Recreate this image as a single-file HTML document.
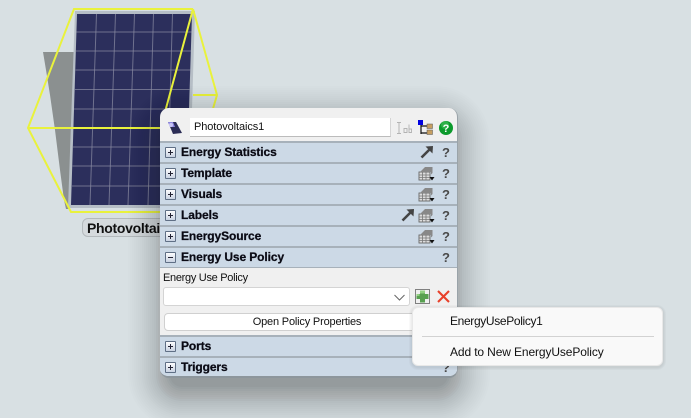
<!DOCTYPE html>
<html><head><meta charset="utf-8"><style>
*{box-sizing:border-box}
html,body{margin:0;padding:0}
body{width:691px;height:418px;overflow:hidden;background:#d8e0e3;position:relative;font-family:"Liberation Sans",sans-serif;color:#111}
.a{position:absolute}
#panel{left:160px;top:108px;width:298px;height:270px;background:#f0f0f0;border-radius:9px;border-right:1px solid #9aa3a9;border-bottom:2px solid #8d969c;overflow:hidden}
.row{position:absolute;left:0;width:297px;height:19px;background:#ccd9e6}
.sep{position:absolute;left:0;width:297px;height:2px;background:#a7b1ba}
.t{position:absolute;left:21px;top:.5px;font-weight:bold;font-size:12px;line-height:16px;color:#0a0a14;letter-spacing:-.1px;-webkit-text-stroke:.25px #0a0a14;white-space:nowrap}
.box{position:absolute;left:5px;top:4px;width:11px;height:11px;border:1px solid #5f6f85;border-radius:1px;background:linear-gradient(#fdfdfe,#c9d3e2)}
.box:before{content:"";position:absolute;left:2px;top:4px;width:5px;height:1px;background:#223}
.box.p:after{content:"";position:absolute;left:4px;top:2px;width:1px;height:5px;background:#223}
.q{position:absolute;left:282px;top:1px;font-weight:bold;font-size:13px;line-height:17px;color:#4a4a4a}
svg.i{position:absolute;overflow:visible}
</style></head><body>

<svg class="a" style="left:0;top:0" width="691" height="418">
<polygon points="43,52 74,52 69,209 66,209 64,200 60,170 55,130 50,95 46,70" fill="#8b9090"/>
<polygon points="75,11 195,11 189,208 68,208" fill="#b6bec6"/>
<polygon points="77,14 192,14 186,205 71,205" fill="#2c2f5c"/>
<g stroke="#8b8da4" stroke-width="1" stroke-opacity=".7" fill="none">
<line x1="96.500" y1="14" x2="90" y2="205"/><line x1="115.500" y1="14" x2="109" y2="205"/><line x1="134.500" y1="14" x2="128" y2="205"/><line x1="153.500" y1="14" x2="148" y2="205"/><line x1="172.500" y1="14" x2="167" y2="205"/>
<line x1="76.500" y1="32" x2="191.500" y2="32"/><line x1="76" y1="51" x2="191" y2="51"/><line x1="75.500" y1="70" x2="190.500" y2="70"/><line x1="75" y1="89.500" x2="190" y2="89.500"/><line x1="74" y1="109" x2="189" y2="109"/><line x1="73.500" y1="128" x2="188.500" y2="128"/><line x1="73" y1="147" x2="188" y2="147"/><line x1="72.500" y1="166" x2="187.500" y2="166"/><line x1="72" y1="186" x2="187" y2="186"/>
</g>
<g stroke="#e9f23c" stroke-width="2" fill="none">
<polyline points="193,9 74,9 28,128 71,212 165,212"/>
<polyline points="28,128 165,128"/>
<polyline points="193,9 217,95 212,112"/>
<line x1="193" y1="9" x2="165" y2="112"/>
<line x1="193" y1="95" x2="217" y2="95"/>
</g>
</svg>

<div class="a" style="left:82px;top:218px;width:90px;height:19px;background:#d5dadd;border:1px solid #b4babd;border-radius:6px;font-weight:bold;font-size:14px;line-height:18px;padding-left:4px;white-space:nowrap;overflow:hidden;letter-spacing:-.3px;color:#111">Photovoltaics1</div>

<svg class="a" style="left:0;top:0" width="691" height="418">
<g fill="#2c3232" fill-opacity=".026">
<rect x="170" y="128" width="278" height="259" rx="12"/><rect x="168" y="126" width="282" height="263" rx="14"/><rect x="166" y="124" width="286" height="267" rx="16"/><rect x="164" y="122" width="290" height="271" rx="18"/><rect x="162" y="120" width="294" height="275" rx="20"/><rect x="160" y="118" width="298" height="279" rx="22"/><rect x="158" y="116" width="302" height="283" rx="24"/><rect x="156" y="114" width="306" height="287" rx="26"/>
</g>
<g fill="#2c3232" fill-opacity=".016">
<rect x="154" y="112" width="310" height="291" rx="28"/><rect x="152" y="110" width="314" height="295" rx="30"/><rect x="150" y="108" width="318" height="299" rx="32"/><rect x="148" y="106" width="322" height="303" rx="34"/><rect x="146" y="104" width="326" height="307" rx="36"/><rect x="144" y="102" width="330" height="311" rx="38"/><rect x="142" y="100" width="334" height="315" rx="40"/>
</g>
<g fill="#2c3232" fill-opacity=".007">
<rect x="140" y="98" width="338" height="319" rx="42"/><rect x="138" y="96" width="342" height="323" rx="44"/><rect x="136" y="94" width="346" height="327" rx="46"/><rect x="134" y="92" width="350" height="331" rx="48"/><rect x="132" y="90" width="354" height="335" rx="50"/><rect x="130" y="88" width="358" height="339" rx="52"/><rect x="128" y="86" width="362" height="343" rx="54"/>
</g>
</svg>

<div class="a" id="panel">
  <svg class="i" style="left:7px;top:13px" width="16" height="14" viewBox="0 0 16 14"><polygon points="1,1 9,1 15,12 6,13" fill="#2b2c55"/><polygon points="1,1 6,1 8,6 3,6" fill="#8e86e0"/><circle cx="4" cy="4" r="2" fill="#c9c6f5"/></svg>
  <div class="a" style="left:30px;top:10px;width:201px;height:19px;background:#fff;border-bottom:1px solid #bcbcbc;border-right:1px solid #d5d5d5;font-size:11px;line-height:18px;padding-left:4px;color:#111;letter-spacing:-.1px">Photovoltaics1</div>
  <svg class="i" style="left:236px;top:13px" width="16" height="14" viewBox="0 0 16 14" fill="none" stroke="#b3b3b3"><path d="M1 1.500h4M1 12.500h4M3 1.500v11"/><path d="M8 7.500h3v4h-3zM13 3.500v8h2.500v-3.500H13" stroke-width=".9"/></svg>
  <svg class="i" style="left:258px;top:12px" width="15" height="16" viewBox="0 0 15 16"><path d="M3 3v11M3 6h6M3 13h6" stroke="#111" stroke-width="1.2" fill="none"/><rect x="0" y="0" width="5" height="5" fill="#0000e0"/><rect x="9" y="4" width="5.500" height="4.500" fill="#c79f61" stroke="#555" stroke-width=".5"/><rect x="9" y="10" width="5.500" height="4.500" fill="#c79f61" stroke="#555" stroke-width=".5"/></svg>
  <svg class="i" style="left:279px;top:13px" width="14" height="14" viewBox="0 0 14 14"><circle cx="7" cy="7" r="7" fill="#0c9a2c"/><circle cx="6" cy="4" r="4" fill="#52c866" opacity=".5"/><text x="7" y="11" font-family="Liberation Sans" font-weight="bold" font-size="11" fill="#fff" text-anchor="middle">?</text></svg>

  <div class="sep" style="top:33px"></div>
  <div class="row" style="top:35px"><div class="box p"></div><div class="t">Energy Statistics</div>
    <svg class="i" style="left:260px;top:2px" width="14" height="14" viewBox="0 0 14 14"><path d="M1.500 12.500L10 4" stroke="#444" stroke-width="2.600"/><polygon points="5.500,1.500 13,1 12.500,8.500" fill="#444"/></svg><div class="q">?</div></div>
  <div class="sep" style="top:54px"></div>
  <div class="row" style="top:56px"><div class="box p"></div><div class="t">Template</div>
    <svg class="i" style="left:258px;top:2px" width="17" height="15" viewBox="0 0 17 15"><rect x="1" y="6" width="11" height="8" fill="#ddd" stroke="#666" stroke-width=".9"/><path d="M1 9h11M1 11.500h11M4.500 6v8M8 6v8" stroke="#777" stroke-width=".8"/><path d="M2 6L7 1h7.500v6L13 8.500V6z" fill="#888"/><polygon points="11.500,11 16.500,11 14,14.500" fill="#111"/></svg><div class="q">?</div></div>
  <div class="sep" style="top:75px"></div>
  <div class="row" style="top:77px"><div class="box p"></div><div class="t">Visuals</div>
    <svg class="i" style="left:258px;top:2px" width="17" height="15" viewBox="0 0 17 15"><rect x="1" y="6" width="11" height="8" fill="#ddd" stroke="#666" stroke-width=".9"/><path d="M1 9h11M1 11.500h11M4.500 6v8M8 6v8" stroke="#777" stroke-width=".8"/><path d="M2 6L7 1h7.500v6L13 8.500V6z" fill="#888"/><polygon points="11.500,11 16.500,11 14,14.500" fill="#111"/></svg><div class="q">?</div></div>
  <div class="sep" style="top:96px"></div>
  <div class="row" style="top:98px"><div class="box p"></div><div class="t">Labels</div>
    <svg class="i" style="left:241px;top:2px" width="14" height="14" viewBox="0 0 14 14"><path d="M1.500 12.500L10 4" stroke="#444" stroke-width="2.600"/><polygon points="5.500,1.500 13,1 12.500,8.500" fill="#444"/></svg>
    <svg class="i" style="left:258px;top:2px" width="17" height="15" viewBox="0 0 17 15"><rect x="1" y="6" width="11" height="8" fill="#ddd" stroke="#666" stroke-width=".9"/><path d="M1 9h11M1 11.500h11M4.500 6v8M8 6v8" stroke="#777" stroke-width=".8"/><path d="M2 6L7 1h7.500v6L13 8.500V6z" fill="#888"/><polygon points="11.500,11 16.500,11 14,14.500" fill="#111"/></svg><div class="q">?</div></div>
  <div class="sep" style="top:117px"></div>
  <div class="row" style="top:119px"><div class="box p"></div><div class="t">EnergySource</div>
    <svg class="i" style="left:258px;top:2px" width="17" height="15" viewBox="0 0 17 15"><rect x="1" y="6" width="11" height="8" fill="#ddd" stroke="#666" stroke-width=".9"/><path d="M1 9h11M1 11.500h11M4.500 6v8M8 6v8" stroke="#777" stroke-width=".8"/><path d="M2 6L7 1h7.500v6L13 8.500V6z" fill="#888"/><polygon points="11.500,11 16.500,11 14,14.500" fill="#111"/></svg><div class="q">?</div></div>
  <div class="sep" style="top:138px"></div>
  <div class="row" style="top:140px"><div class="box"></div><div class="t">Energy Use Policy</div><div class="q">?</div></div>
  <div class="a" style="left:0;top:159px;width:297px;height:1px;background:#a7b1ba"></div>

  <div class="a" style="left:3px;top:163px;font-size:11px;line-height:14px;color:#111;letter-spacing:-.3px;white-space:nowrap">Energy Use Policy</div>
  <div class="a" style="left:3px;top:179px;width:247px;height:19px;background:#fff;border:1px solid #d4d4d4;border-radius:3px"></div>
  <svg class="i" style="left:234px;top:186px" width="11" height="7" viewBox="0 0 11 7"><path d="M.5 1L5.500 6L10.500 1" fill="none" stroke="#666" stroke-width="1"/></svg>
  <svg class="i" style="left:255px;top:181px" width="15" height="15" viewBox="0 0 15 15"><rect x=".5" y=".5" width="14" height="14" fill="none" stroke="#111" stroke-dasharray="1 1"/><path d="M5 1.500h5v3.500h3.500v5H10v3.500H5V10H1.500V5H5z" fill="#58a050"/><path d="M5 1.500h5v3H5zM1.500 5h3v2h-3z" fill="#92d082"/></svg>
  <svg class="i" style="left:277px;top:182px" width="13" height="13" viewBox="0 0 13 13"><path d="M1 1L12 12M12 1L1 12" stroke="#e8402a" stroke-width="2.100"/></svg>
  <div class="a" style="left:4px;top:205px;width:290px;height:18px;background:#fff;border:1px solid #d0d0d0;border-radius:4px;font-size:11px;line-height:16px;text-align:center;color:#111;padding-right:4px;letter-spacing:-.18px">Open Policy Properties</div>

  <div class="sep" style="top:227px"></div>
  <div class="row" style="top:229px"><div class="box p"></div><div class="t">Ports</div><div class="q">?</div></div>
  <div class="sep" style="top:248px"></div>
  <div class="row" style="top:250px;height:18px"><div class="box p"></div><div class="t">Triggers</div><div class="q">?</div></div>
</div>

<svg class="a" style="left:0;top:0" width="691" height="418"><g fill="#000" fill-opacity=".025"><rect x="409" y="305" width="257" height="65" rx="9"/><rect x="410" y="306" width="255" height="63" rx="8"/><rect x="411" y="307" width="253" height="61" rx="7"/></g></svg>
<div class="a" style="left:412px;top:307px;width:251px;height:59px;background:#f9f9f9;border:1px solid #e8e8e8;border-radius:6px">
  <div class="a" style="left:37px;top:6px;font-size:12px;line-height:15px;color:#111;letter-spacing:-.35px;white-space:nowrap">EnergyUsePolicy1</div>
  <div class="a" style="left:9px;top:28px;width:232px;height:1px;background:#d2d2d2"></div>
  <div class="a" style="left:37px;top:37px;font-size:12px;line-height:15px;color:#111;letter-spacing:-.12px;white-space:nowrap">Add to New EnergyUsePolicy</div>
</div>
</body></html>
